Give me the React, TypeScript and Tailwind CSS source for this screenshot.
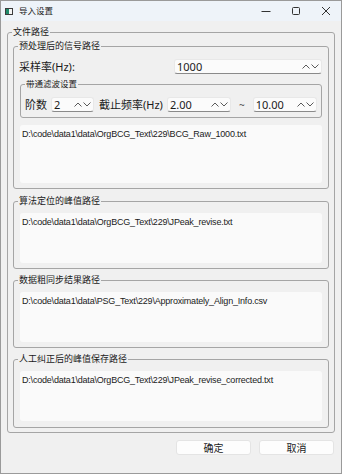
import React from 'react';

const FONT = { fontFamily: '"Noto Sans", "Noto Sans CJK SC", sans-serif' };

// small up/down chevrons used on the right of every spin box
const Arrows = () => (
  <svg width="17" height="7" viewBox="0 0 17 7" className="shrink-0">
    <polyline points="0.5,5.5 4,2 7.5,5.5" fill="none" stroke="#5a5a5a" strokeWidth="1" />
    <polyline points="9.5,1.5 13,5 16.5,1.5" fill="none" stroke="#5a5a5a" strokeWidth="1" />
  </svg>
);

interface SpinProps {
  value: string;
  className: string;
}

const SpinBox: React.FC<SpinProps> = ({ value, className }) => (
  <div
    className={`flex h-[15px] items-center justify-between rounded-[3px] border border-[#e8e8e8] border-b-[#8a8a8a] bg-[#fbfbfb] pl-[2px] pr-[2px] text-[11px] leading-none text-[#1a1a1a] ${className}`}
  >
    <span>{value}</span>
    <Arrows />
  </div>
);

interface GroupProps {
  title: string;
  className?: string;
  legendClass?: string;
  children: React.ReactNode;
}

const Group: React.FC<GroupProps> = ({
  title,
  className = '',
  legendClass = '-ml-[2px] text-[9px] leading-[12px]',
  children,
}) => (
  <fieldset className={`rounded-[3px] border border-[#a5a5a5] ${className}`}>
    <legend className={`px-[1px] text-[#1a1a1a] ${legendClass}`}>{title}</legend>
    {children}
  </fieldset>
);

const PathBox: React.FC<{ text: string; className: string }> = ({ text, className }) => (
  <div
    className={`rounded-[3px] bg-[#fafafa] px-[2px] pt-[3px] text-[9px] leading-[12px] tracking-[-0.2px] text-[#1a1a1a] ${className}`}
    style={{ fontFamily: '"Liberation Sans", Arial, sans-serif' }}
  >
    {text}
  </div>
);

export default function App() {
  return (
    <div
      className="flex h-[474px] w-[342px] flex-col overflow-hidden border border-[#9a9a9a] bg-[#f0f0f0]"
      style={FONT}
    >
      {/* title bar */}
      <div className="flex h-[20px] shrink-0 items-center bg-[#eef3f9]">
        <svg width="8" height="7" viewBox="0 0 8 7" className="ml-[4px]">
          <rect x="0.5" y="0.5" width="7" height="6" fill="#f4f4f4" stroke="#3c3c3c" />
          <rect x="1" y="1" width="3" height="5" fill="#1f8a6a" />
        </svg>
        <span className="ml-[6px] text-[8.5px] text-[#1a1a1a]">导入设置</span>
        <div className="ml-auto flex items-center">
          <div className="flex w-[30px] justify-center">
            <svg width="10" height="10" viewBox="0 0 10 10">
              <line x1="0.5" y1="5.5" x2="9.5" y2="5.5" stroke="#333" strokeWidth="1" />
            </svg>
          </div>
          <div className="flex w-[30px] justify-center">
            <svg width="10" height="10" viewBox="0 0 10 10">
              <rect x="1.5" y="1.5" width="7" height="7" rx="1" fill="none" stroke="#333" strokeWidth="1" />
            </svg>
          </div>
          <div className="flex w-[30px] justify-center">
            <svg width="10" height="10" viewBox="0 0 10 10">
              <path d="M1 1 L9 9 M9 1 L1 9" stroke="#333" strokeWidth="1" />
            </svg>
          </div>
        </div>
      </div>

      <div className="flex flex-1 flex-col px-[6px] pt-[5px]">
        <Group
          title="文件路径"
          legendClass="-ml-[1px] text-[9px] leading-[12px]"
          className="flex flex-col gap-[5px] px-[5px] pb-[4px] pt-[2px]"
        >
          <Group title="预处理后的信号路径" className="px-[6px] pb-[5px]">
            <div className="mt-[7px] flex items-center justify-between">
              <span className="ml-[-1px] text-[11px] leading-none text-[#1a1a1a]">采样率(Hz):</span>
              <SpinBox value="1000" className="w-[148px]" />
            </div>
            <Group
              title="带通滤波设置"
              legendClass="ml-[0px] text-[8.5px] leading-[10px]"
              className="mt-[5px] px-[4px] pb-[5px] pt-[8px]"
            >
              <div className="flex items-center text-[11px] leading-none text-[#1a1a1a]">
                <span>阶数</span>
                <SpinBox value="2" className="ml-[4px] w-[43px]" />
                <span className="ml-[5px]">截止频率(Hz)</span>
                <SpinBox value="2.00" className="ml-[4px] w-[64px]" />
                <span className="ml-[8px] text-[10px] text-[#555]">~</span>
                <SpinBox value="10.00" className="ml-[8px] w-[64px]" />
              </div>
            </Group>
            <PathBox text="D:\code\data1\data\OrgBCG_Text\229\BCG_Raw_1000.txt" className="mt-[7px] h-[58px]" />
          </Group>

          <Group title="算法定位的峰值路径" className="mt-[1px] px-[6px] pb-[5px]">
            <PathBox text="D:\code\data1\data\OrgBCG_Text\229\JPeak_revise.txt" className="mt-[6px] h-[50px]" />
          </Group>

          <Group title="数据粗同步结果路径" className="px-[6px] pb-[5px]">
            <PathBox
              text="D:\code\data1\data\PSG_Text\229\Approximately_Align_Info.csv"
              className="mt-[6px] h-[50px]"
            />
          </Group>

          <Group title="人工纠正后的峰值保存路径" className="px-[6px] pb-[6px]">
            <PathBox
              text="D:\code\data1\data\OrgBCG_Text\229\JPeak_revise_corrected.txt"
              className="mt-[6px] h-[50px]"
            />
          </Group>
        </Group>

        <div className="mt-[7px] flex justify-end gap-[8px] pr-[1px]">
          <button className="h-[15px] w-[75px] rounded-[3px] border border-[#e4e4e4] bg-[#fdfdfd] text-[10px] leading-none text-[#1a1a1a]">
            确定
          </button>
          <button className="h-[15px] w-[75px] rounded-[3px] border border-[#e4e4e4] bg-[#fdfdfd] text-[10px] leading-none text-[#1a1a1a]">
            取消
          </button>
        </div>
      </div>
    </div>
  );
}
